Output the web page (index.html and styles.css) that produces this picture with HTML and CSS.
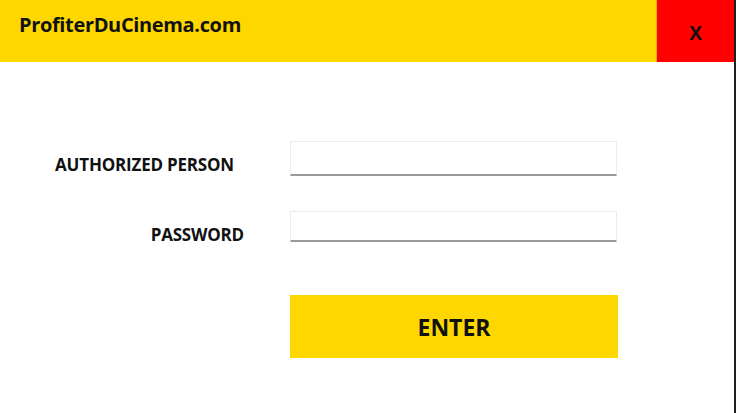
FILE: index.html
```html
<!DOCTYPE html>
<html>
<head>
<meta charset="utf-8">
<link rel="stylesheet" href="styles.css">
</head>
<body>
<div class="frame">
  <div class="app">
    <header class="topbar">
      <div class="brand">ProfiterDuCinema.com</div>
      <div class="close">X</div>
    </header>
    <main class="content">
      <div class="row row-user">
        <label class="label label-user">AUTHORIZED PERSON</label>
        <input class="field" type="text">
      </div>
      <div class="row row-pass">
        <label class="label label-pass">PASSWORD</label>
        <input class="field" type="password">
      </div>
      <div class="row row-btn">
        <div class="label"></div>
        <button class="enter">ENTER</button>
      </div>
    </main>
  </div>
  <div class="edge"></div>
</div>
</body>
</html>
```
FILE: styles.css
```css
html, body {
  margin: 0;
  padding: 0;
  height: 100%;
  background: #ffffff;
}
body {
  font-family: "Open Sans", "Noto Sans", sans-serif;
  color: #111;
}
.frame {
  display: flex;
  height: 413px;
  width: 736px;
}
.app {
  flex: 1;
  display: flex;
  flex-direction: column;
}
.edge {
  width: 2px;
  background: #1e1e1e;
}
.topbar {
  height: 62px;
  display: flex;
  background: #ffd700;
}
.brand {
  flex: 1;
  padding: 11px 0 0 19px;
  font-size: 20px;
  font-weight: 700;
  letter-spacing: -0.35px;
  border-right: 1px solid #f0b400;
}
.close {
  width: 77px;
  background: #ff0000;
  display: flex;
  align-items: center;
  justify-content: center;
  font-size: 19px;
  font-weight: 700;
  padding-top: 4px;
  box-sizing: border-box;
}
.content {
  flex: 1;
  padding-top: 79px;
}
.row {
  display: flex;
  align-items: flex-start;
}
.row-user { height: 35px; }
.row-pass { height: 31px; margin-top: 35px; }
.row-btn { margin-top: 53px; }
.label {
  width: 290px;
  box-sizing: border-box;
  text-align: right;
  font-size: 17px;
  line-height: 23px;
  font-weight: 700;
  letter-spacing: -0.2px;
  padding-top: 12px;
}
.label-user { padding-right: 56px; }
.label-pass { padding-right: 46px; }
.field {
  width: 327px;
  height: 100%;
  box-sizing: border-box;
  margin: 0;
  border: 1px solid #ececec;
  border-bottom: 2px solid #9a9a9a;
  background: #fff;
  border-radius: 1px;
  outline: none;
  box-shadow: 0 0 1px rgba(0,0,0,0.06);
}
.enter {
  width: 328px;
  height: 63px;
  border: 0;
  margin: 0;
  background: #ffd700;
  font-family: "Open Sans", "Noto Sans", sans-serif;
  font-size: 23px;
  font-weight: 700;
  color: #111;
  padding: 0;
}
```
